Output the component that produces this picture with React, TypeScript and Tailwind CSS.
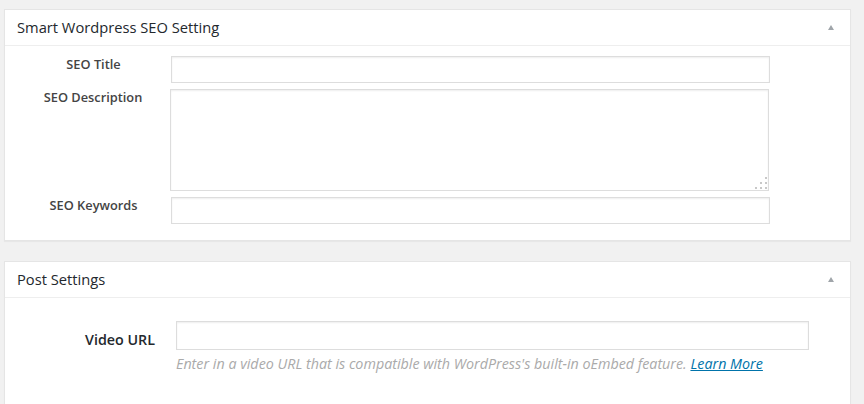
import React from "react";

const font = { fontFamily: '"Open Sans", "Noto Sans", "Liberation Sans", sans-serif' };

function Toggle() {
  return (
    <svg viewBox="0 0 6 5" className="w-[6px] h-[5px]">
      <path d="M3 0 L6 5 L0 5 Z" fill="#a0a5aa" />
    </svg>
  );
}

function Grip() {
  // dotted resize handle in the textarea corner
  const dots = [
    [10, 0],
    [5, 5],
    [10, 5],
    [0, 10],
    [5, 10],
    [10, 10],
  ];
  return (
    <svg viewBox="0 0 12 12" className="absolute right-[2px] bottom-[2px] w-[12px] h-[12px]">
      {dots.map(([x, y], i) => (
        <rect key={i} x={x} y={y} width={2} height={2} fill="#c8c8c8" />
      ))}
    </svg>
  );
}

function Panel({ title, children }: { title: string; children: React.ReactNode }) {
  return (
    <div className="w-[847px] bg-white border border-[#e5e5e5] shadow-[0_1px_1px_rgba(0,0,0,0.04)]">
      <div className="h-[36px] border-b border-[#eeeeee] flex items-center justify-between pl-[12px] pr-[16px]">
        <h2 className="text-[14.7px] text-[#23282d] leading-none">{title}</h2>
        <Toggle />
      </div>
      {children}
    </div>
  );
}

const inputCls =
  "block bg-white border border-[#dddddd] shadow-[inset_0_1px_2px_rgba(0,0,0,0.07)] outline-none";

const labelCls = "text-center text-[12.8px] font-semibold text-[#444444] leading-[16px]";

export default function App() {
  return (
    <div className="w-[864px] h-[404px] overflow-hidden bg-[#f1f1f1] pt-[9px] pl-[4px]" style={font}>
      <Panel title="Smart Wordpress SEO Setting">
        <div className="pt-[10px] pb-[16px] pl-[11px] flex flex-col gap-[6px]">
          <div className="flex items-start">
            <label className={`w-[155px] ${labelCls}`}>SEO Title</label>
            <input className={`${inputCls} w-[599px] h-[27px]`} />
          </div>
          <div className="flex items-start">
            <label className={`w-[154px] ${labelCls}`}>SEO Description</label>
            <div className="relative">
              <textarea className={`${inputCls} w-[599px] h-[102px] resize-none`} />
              <Grip />
            </div>
          </div>
          <div className="flex items-start">
            <label className={`w-[155px] ${labelCls}`}>SEO Keywords</label>
            <input className={`${inputCls} w-[599px] h-[27px]`} />
          </div>
        </div>
      </Panel>

      <div className="h-[20px]" />

      <Panel title="Post Settings">
        <div className="pt-[23px] pb-[30px] flex">
          <div className="w-[150px] flex justify-end pt-[11px]">
            <label className="text-[14.3px] font-semibold text-[#23282d] leading-[16px]">Video URL</label>
          </div>
          <div className="ml-[21px]">
            <input className={`${inputCls} w-[633px] h-[29px]`} />
            <p className="mt-[4px] text-[14.3px] italic text-[#aaaaaa] leading-[20px]">
              Enter in a video URL that is compatible with WordPress's built-in oEmbed feature.{" "}
              <a href="#" className="text-[#0073aa] underline">
                Learn More
              </a>
            </p>
          </div>
        </div>
      </Panel>
    </div>
  );
}
